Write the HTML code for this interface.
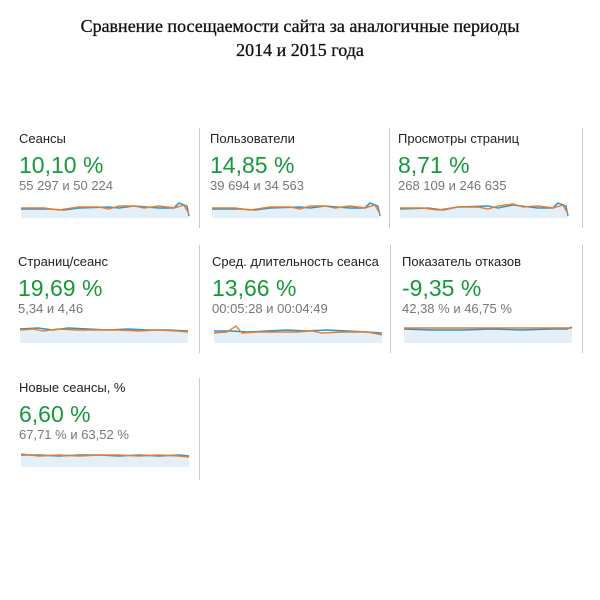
<!DOCTYPE html>
<html><head><meta charset="utf-8"><style>
body{margin:0;width:600px;height:600px;background:#fff;position:relative;overflow:hidden;font-family:"Liberation Sans",Arial,sans-serif}
h1{position:absolute;top:14px;left:0;width:600px;margin:0;text-align:center;font:normal 18px/24px "Liberation Serif","DejaVu Serif",serif;color:#111;-webkit-text-stroke:0.3px #111}
.c{position:absolute;width:175px}
.l{font-size:13px;color:#222;line-height:16px}
.n{font-size:23px;color:#16993a;line-height:26px;margin-top:5px}
.s{font-size:13px;color:#777;line-height:14px;margin-top:1px}
svg{display:block;margin-top:9px}
.d{position:absolute;width:1px;background:#ccc}
</style></head><body>
<h1>Сравнение посещаемости сайта за аналогичные периоды<br>2014 и 2015 года</h1>

<div class="d" style="left:199px;top:128px;height:100px"></div>
<div class="d" style="left:389px;top:128px;height:100px"></div>
<div class="d" style="left:582px;top:128px;height:100px"></div>
<div class="d" style="left:199px;top:245px;height:108px"></div>
<div class="d" style="left:390px;top:245px;height:108px"></div>
<div class="d" style="left:582px;top:245px;height:108px"></div>
<div class="d" style="left:199px;top:378px;height:102px"></div>

<div class="c" style="left:19px;top:131px"><div class="l">Сеансы</div><div class="n">10,10 %</div><div class="s">55 297 и 50 224</div>
<svg width="172" height="16"><path d="M2 7 L30 7 L45 8 L60 6 L90 5 L100 6 L115 4 L140 6 L160 1 L168 4 L170 14 L170 16 L2 16Z" fill="#e3f0fa"/><polyline points="2,7 30,7 45,8 60,6 90,5 100,6 115,4 140,6 155,6 160,1 168,4 170,14" fill="none" stroke="#2a93d5" stroke-width="1.4"/><polyline points="2,6 25,6 40,8 60,5 80,5 90,7 100,4 115,4 125,6 140,4 155,6 165,3 170,12" fill="none" stroke="#ed7d20" stroke-width="1.4"/></svg></div>

<div class="c" style="left:210px;top:131px"><div class="l">Пользователи</div><div class="n">14,85 %</div><div class="s">39 694 и 34 563</div>
<svg width="172" height="16"><path d="M2 7 L30 7 L45 8 L60 6 L90 5 L100 6 L115 4 L140 6 L160 1 L168 4 L170 14 L170 16 L2 16Z" fill="#e3f0fa"/><polyline points="2,7 30,7 45,8 60,6 90,5 100,6 115,4 140,6 155,6 160,1 168,4 170,14" fill="none" stroke="#2a93d5" stroke-width="1.4"/><polyline points="2,6 25,6 40,8 60,5 80,5 90,7 100,4 115,4 125,6 140,4 155,6 165,3 170,12" fill="none" stroke="#ed7d20" stroke-width="1.4"/></svg></div>

<div class="c" style="left:398px;top:131px"><div class="l">Просмотры страниц</div><div class="n">8,71 %</div><div class="s">268 109 и 246 635</div>
<svg width="172" height="16"><path d="M2 7 L30 7 L45 8 L60 6 L90 5 L100 6 L115 4 L140 6 L160 1 L168 4 L170 14 L170 16 L2 16Z" fill="#e3f0fa"/><polyline points="2,7 30,6 45,8 60,5 90,4 100,6 115,3 140,6 155,6 160,1 168,4 170,14" fill="none" stroke="#2a93d5" stroke-width="1.4"/><polyline points="2,6 25,6 40,8 60,5 80,5 90,7 100,4 115,2 125,5 140,4 155,6 165,3 170,12" fill="none" stroke="#ed7d20" stroke-width="1.4"/></svg></div>

<div class="c" style="left:18px;top:254px"><div class="l">Страниц/сеанс</div><div class="n">19,69 %</div><div class="s">5,34 и 4,46</div>
<svg width="172" height="18"><path d="M2 4 L170 6 L170 18 L2 18Z" fill="#e3f0fa"/><polyline points="2,4 20,3 35,5 50,3 70,4 90,5 110,4 130,5 150,5 170,6" fill="none" stroke="#2a93d5" stroke-width="1.4"/><polyline points="2,5 15,4 25,6 40,4 60,5 80,5 100,5 120,6 140,5 160,6 170,7" fill="none" stroke="#ed7d20" stroke-width="1.4"/></svg></div>

<div class="c" style="left:212px;top:254px"><div class="l">Сред. длительность сеанса</div><div class="n">13,66 %</div><div class="s">00:05:28 и 00:04:49</div>
<svg width="172" height="18"><path d="M2 6 L170 8 L170 18 L2 18Z" fill="#e3f0fa"/><polyline points="2,6 20,6 35,7 55,6 75,5 95,6 115,5 135,6 155,7 170,8" fill="none" stroke="#2a93d5" stroke-width="1.4"/><polyline points="2,8 15,7 24,1 30,8 45,7 65,7 85,7 100,6 110,8 130,7 155,7 170,10" fill="none" stroke="#ed7d20" stroke-width="1.4"/></svg></div>

<div class="c" style="left:402px;top:254px"><div class="l">Показатель отказов</div><div class="n">-9,35 %</div><div class="s">42,38 % и 46,75 %</div>
<svg width="172" height="18"><path d="M2 4 L170 2 L170 18 L2 18Z" fill="#e3f0fa"/><polyline points="2,4 30,5 60,5 90,4 120,5 150,4 165,4 170,2" fill="none" stroke="#2a93d5" stroke-width="1.4"/><polyline points="2,3 30,3 60,3 90,3 120,3 150,3 170,3" fill="none" stroke="#ed7d20" stroke-width="1.4"/></svg></div>

<div class="c" style="left:19px;top:380px"><div class="l">Новые сеансы, %</div><div class="n">6,60 %</div><div class="s">67,71 % и 63,52 %</div>
<svg width="172" height="16"><path d="M2 4 L170 4 L170 16 L2 16Z" fill="#e3f0fa"/><polyline points="2,4 20,4 40,5 60,4 80,4 100,5 120,4 140,5 160,4 170,5" fill="none" stroke="#2a93d5" stroke-width="1.4"/><polyline points="2,3 20,5 40,4 60,5 80,4 100,4 120,5 140,4 160,5 170,6" fill="none" stroke="#ed7d20" stroke-width="1.4"/></svg></div>
</body></html>
